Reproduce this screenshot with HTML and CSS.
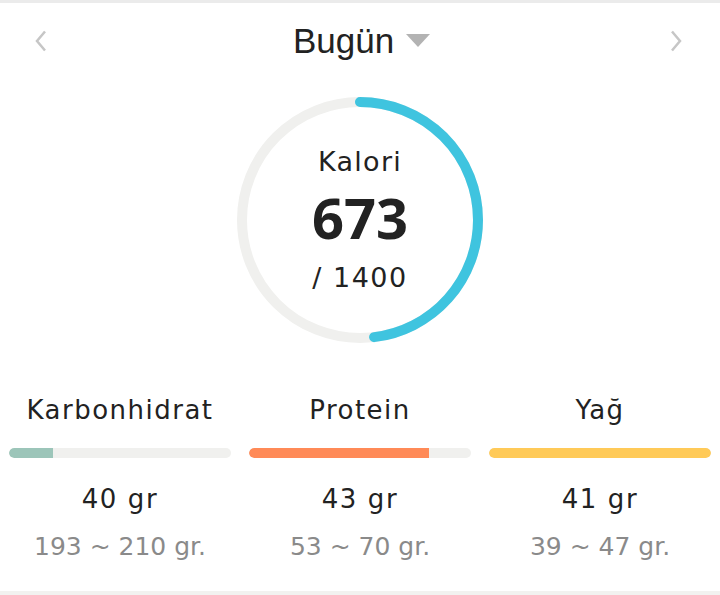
FILE: index.html
```html
<!DOCTYPE html>
<html lang="tr">
<head>
    <meta charset="UTF-8">
    <meta name="viewport" content="width=device-width, initial-scale=1.0">
    <title>Bugün</title>
    <link rel="stylesheet" href="styles.css">
</head>
<body>
    <div class="page">
        <header class="day-nav">
            <svg class="chevron" width="12" height="22" viewBox="0 0 12 22">
                <polyline points="10,1.5 2,11 10,20.5" />
            </svg>
            <div class="day-title">
                <span>Bugün</span>
                <svg class="caret" width="24" height="14" viewBox="0 0 24 14">
                    <polygon points="0,0 24,0 12,13" />
                </svg>
            </div>
            <svg class="chevron" width="12" height="22" viewBox="0 0 12 22">
                <polyline points="2,1.5 10,11 2,20.5" />
            </svg>
        </header>

        <section class="calorie">
            <div class="ring">
                <svg width="250" height="250" viewBox="0 0 250 250">
                    <circle class="track" cx="125" cy="125" r="118" />
                    <circle class="progress" cx="125" cy="125" r="118"
                        stroke-dasharray="356.4 741.4" transform="rotate(-90 125 125)" />
                </svg>
                <div class="ring-text">
                    <div class="ring-label">Kalori</div>
                    <div class="ring-value">673</div>
                    <div class="ring-goal">/ 1400</div>
                </div>
            </div>
        </section>

        <section class="macros">
            <div class="macro">
                <div class="macro-name">Karbonhidrat</div>
                <div class="bar"><div class="fill carb" style="width: 20%"></div></div>
                <div class="macro-value">40 gr</div>
                <div class="macro-range">193 ~ 210 gr.</div>
            </div>
            <div class="macro">
                <div class="macro-name">Protein</div>
                <div class="bar"><div class="fill protein" style="width: 81%"></div></div>
                <div class="macro-value">43 gr</div>
                <div class="macro-range">53 ~ 70 gr.</div>
            </div>
            <div class="macro">
                <div class="macro-name">Yağ</div>
                <div class="bar"><div class="fill fat" style="width: 100%"></div></div>
                <div class="macro-value">41 gr</div>
                <div class="macro-range">39 ~ 47 gr.</div>
            </div>
        </section>
    </div>
</body>
</html>
```

FILE: styles.css
```css
:root {
    --text-color: #222;
    --muted-color: #8a8a8a;
    --track-color: #f0f0ee;
    --blue: #3fc4df;
    --carb: #9cc5b9;
    --protein: #ff8a57;
    --fat: #ffca58;
}

* {
    box-sizing: border-box;
    margin: 0;
    padding: 0;
}

body {
    font-family: 'DejaVu Sans', sans-serif;
    background-color: #fff;
    color: var(--text-color);
}

.page {
    height: 595px;
    border-top: 3px solid #ebebeb;
    border-bottom: 4px solid #f2f2f0;
}

.day-nav {
    height: 76px;
    display: grid;
    grid-template-columns: 1fr auto 1fr;
    align-items: center;
    padding: 0 38px 0 35px;
}

.chevron:last-child {
    justify-self: end;
}

.chevron polyline {
    fill: none;
    stroke: #c6c6c6;
    stroke-width: 2.5;
}

.day-title {
    display: flex;
    align-items: center;
    gap: 12px;
    margin-left: 6px;
    font-family: 'Liberation Sans', Arial, sans-serif;
    font-size: 35px;
}

.caret {
    fill: #b3b3b3;
}

.calorie {
    display: flex;
    justify-content: center;
    margin-top: 16px;
}

.ring {
    display: grid;
}

.ring svg,
.ring-text {
    grid-area: 1 / 1;
}

.track,
.progress {
    fill: none;
    stroke-width: 10;
}

.track {
    stroke: var(--track-color);
}

.progress {
    stroke: var(--blue);
    stroke-linecap: round;
}

.ring-text {
    display: flex;
    flex-direction: column;
    align-items: center;
    justify-content: center;
    text-align: center;
}

.ring-label {
    font-size: 27px;
    line-height: 30px;
    letter-spacing: 1.3px;
}

.ring-value {
    font-family: 'Open Sans', sans-serif;
    font-size: 56px;
    font-weight: 700;
    line-height: 66px;
    margin: 7px 0 13px;
}

.ring-goal {
    font-size: 27px;
    line-height: 30px;
    letter-spacing: 1.5px;
}

.macros {
    display: grid;
    grid-template-columns: repeat(3, 1fr);
    margin-top: 50px;
}

.macro {
    padding: 0 9px;
    text-align: center;
}

.macro-name {
    font-size: 26px;
    line-height: 30px;
    letter-spacing: 1.5px;
}

.bar {
    height: 10px;
    margin-top: 23px;
    border-radius: 5px;
    background-color: var(--track-color);
    overflow: hidden;
}

.fill {
    height: 100%;
    border-radius: 5px 0 0 5px;
}

.fill.carb {
    background-color: var(--carb);
}

.fill.protein {
    background-color: var(--protein);
}

.fill.fat {
    background-color: var(--fat);
    border-radius: 5px;
}

.macro-value {
    font-size: 26px;
    line-height: 30px;
    letter-spacing: 1.6px;
    margin-top: 26px;
}

.macro-range {
    font-size: 25px;
    line-height: 30px;
    margin-top: 18px;
    color: var(--muted-color);
}
```
